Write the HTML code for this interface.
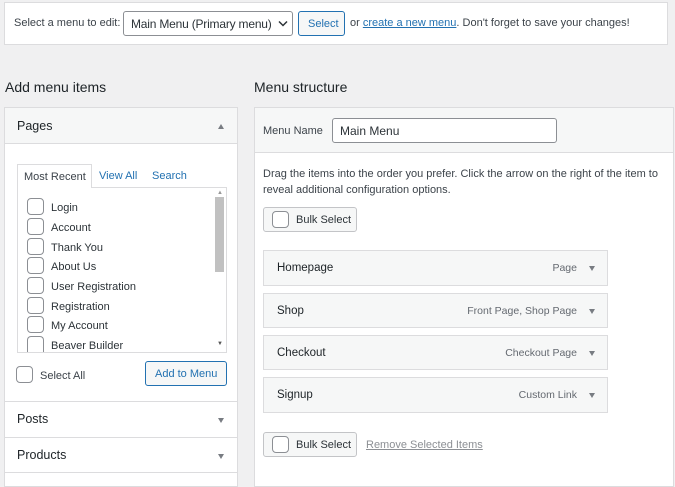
<!DOCTYPE html>
<html><head><style>
*{box-sizing:border-box;margin:0;padding:0}
body{width:675px;height:477px;background:#f0f0f1;font-family:"Liberation Sans",sans-serif;color:#3c434a;position:relative;overflow:hidden;font-size:11px}
.a{position:absolute}
.box{background:#fff;border:1px solid #dcdcde}
.cb{position:absolute;width:17px;height:17px;border:1px solid #8c8f94;border-radius:4px;background:#fff}
.btn{position:absolute;border:1px solid #c3c4c7;background:#f6f7f7;border-radius:3px;font-size:11px;color:#2c3338}
.item{position:absolute;left:263px;width:345px;background:#f6f7f7;border:1px solid #dcdcde;font-size:11.5px;color:#1d2327}
.item .t{position:absolute;left:13px;top:50%;transform:translateY(-50%)}
.item .r{position:absolute;right:30px;top:50%;transform:translateY(-50%);font-weight:normal;color:#646970;font-size:10.5px}
.tri{position:absolute;width:0;height:0;border-left:3.5px solid transparent;border-right:3.5px solid transparent;border-top:5px solid #787c82}
.item .tri{right:12px;top:15px}
.li{position:absolute;left:51px;font-size:11px;color:#2c3338}
.h{position:absolute;font-size:12.5px;color:#1d2327}
</style></head><body>
<div class="a box" style="left:4px;top:2px;width:664px;height:43px"></div>
<div class="a" style="left:14px;top:17px;font-size:11px">Select a menu to edit:</div>
<div class="a" style="left:123px;top:11px;width:170px;height:25px;border:1px solid #8c8f94;border-radius:3px;background:#fff;font-size:12px;padding:5px 0 0 7px;color:#2c3338;letter-spacing:-0.2px">Main Menu (Primary menu)</div>
<svg class="a" style="left:278px;top:20px" width="10" height="8"><path d="M1 1.5l4 4 4-4" fill="none" stroke="#2c3338" stroke-width="1.5"/></svg>
<div class="btn" style="left:298px;top:11px;width:47px;height:25px;border-color:#2271b1;color:#2271b1;padding:6px 0 0 9px">Select</div>
<div class="a" style="left:350px;top:17px;font-size:11px">or <span style="color:#2271b1;text-decoration:underline">create a new menu</span>. Don't forget to save your changes!</div>

<div class="a" style="left:5px;top:79px;font-size:14px;color:#1d2327">Add menu items</div>
<div class="a" style="left:254px;top:79px;font-size:14px;color:#1d2327">Menu structure</div>

<div class="a box" style="left:4px;top:107px;width:234px;height:380px"></div>
<div class="a" style="left:5px;top:108px;width:232px;height:36px;background:#f6f7f7;border-bottom:1px solid #dcdcde"></div>
<div class="h" style="left:17px;top:119px">Pages</div>
<div class="tri" style="left:218px;top:124px;border-top:none;border-bottom:5px solid #787c82"></div>
<div class="a" style="left:17px;top:164px;width:75px;height:24px;border:1px solid #dcdcde;border-bottom:none;background:#fff;font-size:11px;padding:6px 0 0 6px;z-index:2">Most Recent</div>
<div class="a" style="left:99px;top:170px;color:#2271b1">View All</div>
<div class="a" style="left:152px;top:170px;color:#2271b1">Search</div>
<div class="a" style="left:17px;top:187px;width:210px;height:166px;border:1px solid #dcdcde;background:#fff"></div>
<div class="a" style="left:215px;top:197px;width:9px;height:75px;background:#c1c1c1"></div>
<div class="a" style="left:217px;top:190px;font-size:6px;color:#999">▲</div>
<div class="a" style="left:217px;top:341px;font-size:6px;color:#555">▼</div>
<div class="cb" style="left:27px;top:198px"></div><div class="li" style="top:202px">Login</div>
<div class="cb" style="left:27px;top:218px"></div><div class="li" style="top:222px">Account</div>
<div class="cb" style="left:27px;top:238px"></div><div class="li" style="top:242px">Thank You</div>
<div class="cb" style="left:27px;top:257px"></div><div class="li" style="top:261px">About Us</div>
<div class="cb" style="left:27px;top:277px"></div><div class="li" style="top:281px">User Registration</div>
<div class="cb" style="left:27px;top:297px"></div><div class="li" style="top:301px">Registration</div>
<div class="cb" style="left:27px;top:316px"></div><div class="li" style="top:320px">My Account</div>
<div class="cb" style="left:27px;top:336px;height:16px;border-bottom:none;border-radius:4px 4px 0 0"></div><div class="li" style="top:340px">Beaver Builder</div>
<div class="cb" style="left:16px;top:366px"></div><div class="a" style="left:40px;top:370px;font-size:11px">Select All</div>
<div class="btn" style="left:145px;top:361px;width:82px;height:25px;border-color:#2271b1;color:#2271b1;background:#f6f7f7;padding:6px 0 0 9px">Add to Menu</div>
<div class="a" style="left:5px;top:401px;width:232px;border-top:1px solid #dcdcde"></div>
<div class="h" style="left:17px;top:412px">Posts</div>
<div class="tri" style="left:218px;top:418px"></div>
<div class="a" style="left:5px;top:437px;width:232px;border-top:1px solid #dcdcde"></div>
<div class="h" style="left:17px;top:448px">Products</div>
<div class="tri" style="left:218px;top:454px"></div>
<div class="a" style="left:5px;top:472px;width:232px;border-top:1px solid #dcdcde"></div>

<div class="a box" style="left:254px;top:107px;width:420px;height:380px"></div>
<div class="a" style="left:255px;top:108px;width:418px;height:45px;background:#f6f7f7;border-bottom:1px solid #dcdcde"></div>
<div class="a" style="left:263px;top:125px;font-size:11px">Menu Name</div>
<div class="a" style="left:332px;top:118px;width:225px;height:25px;border:1px solid #8c8f94;border-radius:3px;background:#fff;font-size:12px;padding:5px 0 0 7px;color:#2c3338">Main Menu</div>
<div class="a" style="left:263px;top:166px;font-size:11px;line-height:16px;width:405px">Drag the items into the order you prefer. Click the arrow on the right of the item to reveal additional configuration options.</div>
<div class="btn" style="left:263px;top:207px;width:94px;height:25px;padding:6px 0 0 32px">Bulk Select</div>
<div class="cb" style="left:272px;top:211px"></div>
<div class="item" style="top:250px;height:36px"><span class="t">Homepage</span><span class="r">Page</span><div class="tri"></div></div>
<div class="item" style="top:293px;height:35px"><span class="t">Shop</span><span class="r">Front Page, Shop Page</span><div class="tri"></div></div>
<div class="item" style="top:335px;height:35px"><span class="t">Checkout</span><span class="r">Checkout Page</span><div class="tri"></div></div>
<div class="item" style="top:377px;height:36px"><span class="t">Signup</span><span class="r">Custom Link</span><div class="tri"></div></div>
<div class="btn" style="left:263px;top:432px;width:94px;height:25px;padding:6px 0 0 32px">Bulk Select</div>
<div class="cb" style="left:272px;top:436px"></div>
<div class="a" style="left:366px;top:439px;font-size:11px;color:#8c8f94;text-decoration:underline">Remove Selected Items</div>
</body></html>
